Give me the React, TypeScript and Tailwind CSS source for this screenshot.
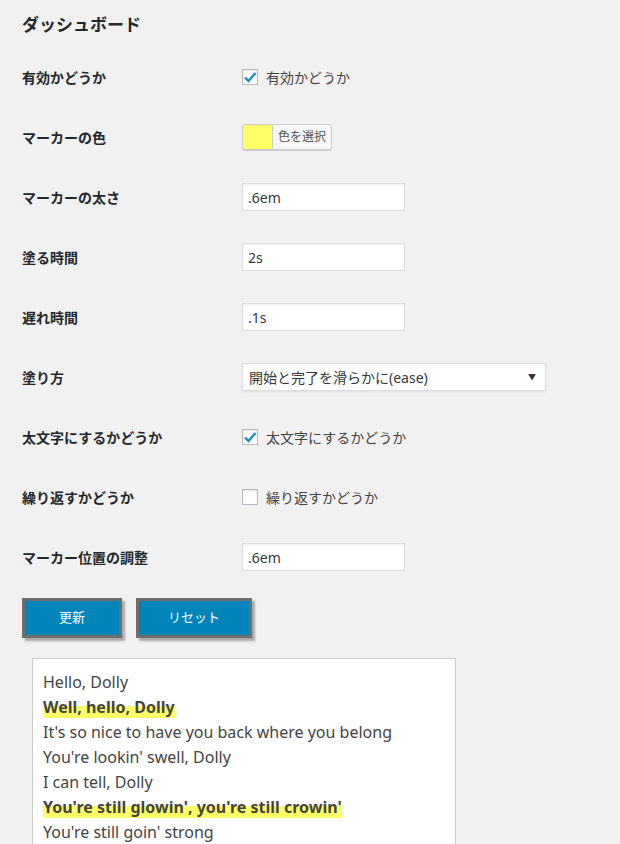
import React from "react";

const jp = "font-['Segoe_UI','Noto_Sans','Noto_Sans_CJK_JP',sans-serif]";

const Check = ({ checked }: { checked: boolean }) => (
  <span className="w-4 h-4 border border-[#b4b9be] bg-white flex items-center justify-center shadow-[inset_0_1px_2px_rgba(0,0,0,0.1)]">
    {checked && (
      <svg width="14" height="14" viewBox="0 0 14 14">
        <path d="M2 7.5 L5.5 11 L12.5 3" fill="none" stroke="#1e8cbe" strokeWidth="2.4" />
      </svg>
    )}
  </span>
);

const Row = ({ label, children }: { label: string; children: React.ReactNode }) => (
  <div className="flex items-center h-[60px]">
    <div className="w-[220px] text-[14px] font-bold text-[#23282d]">{label}</div>
    <div className="flex items-center">{children}</div>
  </div>
);

const TextInput = ({ value }: { value: string }) => (
  <div className="w-[163px] h-[28px] bg-white border border-[#ddd] shadow-[inset_0_1px_2px_rgba(0,0,0,0.07)] flex items-center px-[5px] text-[14px] text-[#32373c]">
    {value}
  </div>
);

const CheckLabel = ({ checked, text }: { checked: boolean; text: string }) => (
  <div className="flex items-center gap-2 text-[14px] text-[#444]">
    <Check checked={checked} />
    <span>{text}</span>
  </div>
);

const lines: { t: string; hl?: boolean }[] = [
  { t: "Hello, Dolly" },
  { t: "Well, hello, Dolly", hl: true },
  { t: "It's so nice to have you back where you belong" },
  { t: "You're lookin' swell, Dolly" },
  { t: "I can tell, Dolly" },
  { t: "You're still glowin', you're still crowin'", hl: true },
  { t: "You're still goin' strong" },
];

export default function App() {
  return (
    <div className={`h-[844px] overflow-hidden bg-[#f1f1f1] pl-[22px] ${jp}`}>
      <h1 className="pt-[12px] h-[47px] text-[17px] font-bold text-[#23282d]">ダッシュボード</h1>
      <Row label="有効かどうか">
        <CheckLabel checked text="有効かどうか" />
      </Row>
      <Row label="マーカーの色">
        <div className="flex h-[26px] border border-[#ccc] rounded-[3px] bg-[#f7f7f7] shadow-[0_1px_0_#ccc] overflow-hidden">
          <span className="w-[30px] bg-[#ffff66] border-r border-[#ccc]" />
          <span className="px-[5px] text-[12px] text-[#555] flex items-center">色を選択</span>
        </div>
      </Row>
      <Row label="マーカーの太さ">
        <TextInput value=".6em" />
      </Row>
      <Row label="塗る時間">
        <TextInput value="2s" />
      </Row>
      <Row label="遅れ時間">
        <TextInput value=".1s" />
      </Row>
      <Row label="塗り方">
        <div className="w-[304px] h-[28px] bg-white border border-[#ddd] shadow-[0_1px_2px_rgba(0,0,0,0.07)] flex items-center justify-between pl-[6px] pr-[9px] text-[14px] text-[#32373c]">
          <span>開始と完了を滑らかに(ease)</span>
          <span className="text-[8px] text-[#333]">▼</span>
        </div>
      </Row>
      <Row label="太文字にするかどうか">
        <CheckLabel checked text="太文字にするかどうか" />
      </Row>
      <Row label="繰り返すかどうか">
        <CheckLabel checked={false} text="繰り返すかどうか" />
      </Row>
      <Row label="マーカー位置の調整">
        <TextInput value=".6em" />
      </Row>
      <div className="flex gap-[14px] mt-[11px]">
        <button className="w-[100px] h-[40px] bg-[#0085ba] border-[3px] border-[#6e6e6e] text-white text-[13px] shadow-[3px_3px_2px_rgba(0,0,0,0.3)]">
          更新
        </button>
        <button className="w-[116px] h-[40px] bg-[#0085ba] border-[3px] border-[#6e6e6e] text-white text-[13px] shadow-[3px_3px_2px_rgba(0,0,0,0.3)]">
          リセット
        </button>
      </div>
      <div className="mt-[20px] ml-[10px] w-[424px] bg-white border border-[#ccc] pt-[11px] pb-[10px] px-[10px] text-[16px] leading-[25px] text-[#444]">
        {lines.map((l, i) => (
          <div key={i}>
            {l.hl ? (
              <span className="font-bold bg-[linear-gradient(transparent_45%,#ffff66_45%)]">{l.t}</span>
            ) : (
              l.t
            )}
          </div>
        ))}
      </div>
    </div>
  );
}
